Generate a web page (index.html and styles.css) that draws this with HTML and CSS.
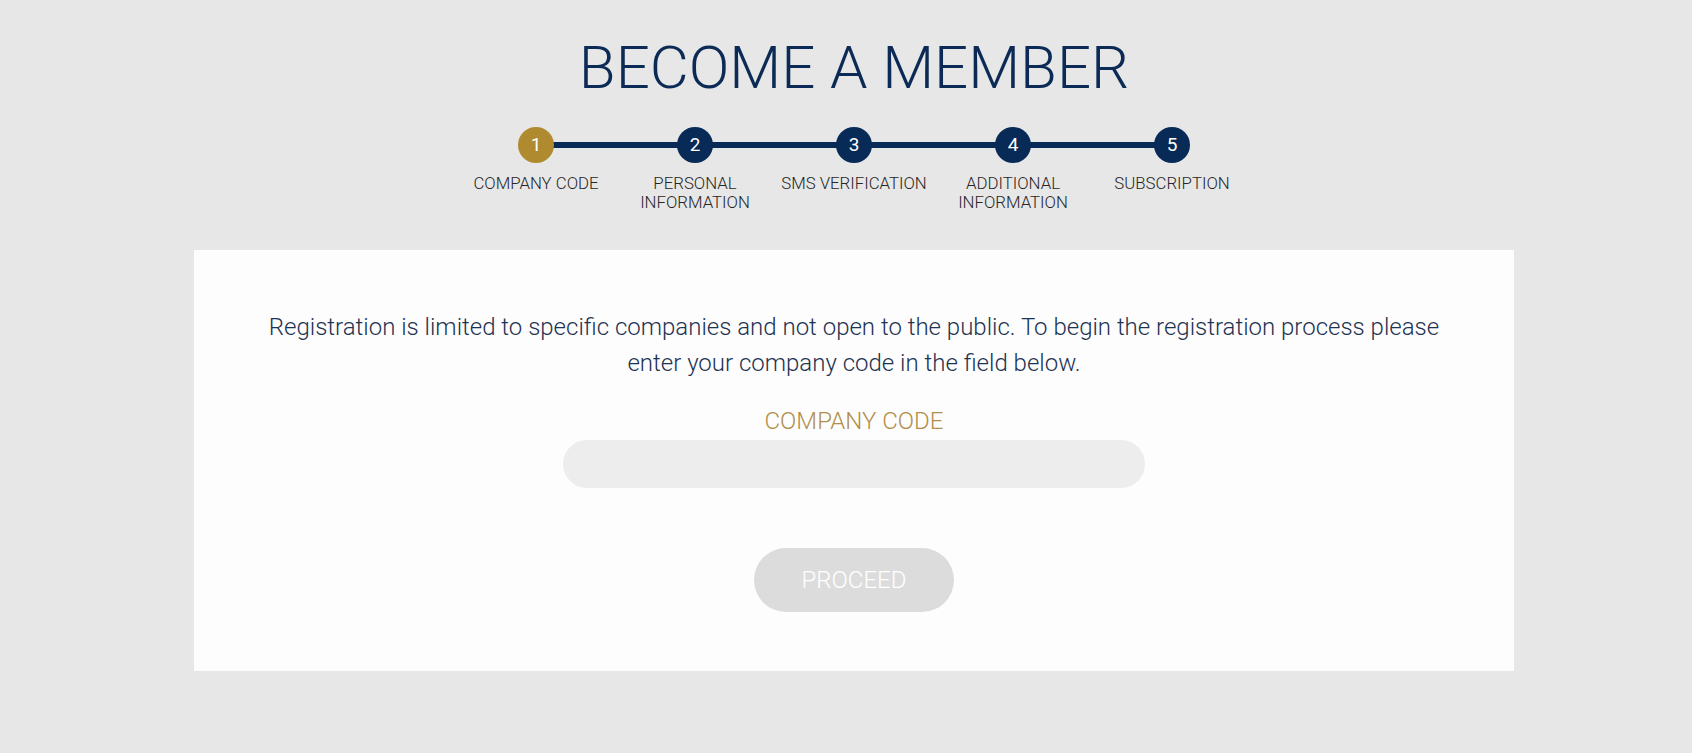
FILE: index.html
```html
<!DOCTYPE html>
<html lang="en">
<head>
<meta charset="utf-8">
<title>Become a member</title>
<link rel="stylesheet" href="styles.css">
</head>
<body>
<main class="page">
  <h1 class="title">BECOME A MEMBER</h1>
  <ol class="stepper">
    <li class="step step-active"><span class="dot">1</span><span class="step-label">COMPANY CODE</span></li>
    <li class="step"><span class="dot">2</span><span class="step-label">PERSONAL<br>INFORMATION</span></li>
    <li class="step"><span class="dot">3</span><span class="step-label">SMS VERIFICATION</span></li>
    <li class="step"><span class="dot">4</span><span class="step-label">ADDITIONAL<br>INFORMATION</span></li>
    <li class="step"><span class="dot">5</span><span class="step-label">SUBSCRIPTION</span></li>
  </ol>
  <section class="card">
    <p class="intro">Registration is limited to specific companies and not open to the public. To begin the registration process please enter your company code in the field below.</p>
    <label class="field-label" for="code">COMPANY CODE</label>
    <input class="field" id="code" type="text">
    <button class="proceed" type="button">PROCEED</button>
  </section>
</main>
</body>
</html>
```
FILE: styles.css
```css
html, body {
  margin: 0;
  padding: 0;
  background: #e7e7e7;
}
body {
  font-family: Roboto, "Liberation Sans", sans-serif;
  padding-left: 16px;
}
.page {
  width: 1320px;
  margin: 0 auto;
  display: flex;
  flex-direction: column;
  align-items: center;
  padding-top: 32px;
  padding-bottom: 81px;
}
.title {
  margin: 0;
  font-size: 60px;
  line-height: 72px;
  font-weight: 300;
  color: #0b2a55;
  letter-spacing: 0;
}
.stepper {
  list-style: none;
  margin: 23px 0 0;
  padding: 0;
  display: flex;
  position: relative;
}
.stepper::before {
  content: "";
  position: absolute;
  left: 79px;
  right: 79px;
  top: 15px;
  height: 6px;
  background: #072a57;
}
.step {
  width: 159px;
  display: flex;
  flex-direction: column;
  align-items: center;
  position: relative;
}
.dot {
  width: 36px;
  height: 36px;
  border-radius: 50%;
  background: #072a57;
  color: #fff;
  font-size: 19px;
  line-height: 36px;
  text-align: center;
  font-weight: 400;
  position: relative;
}
.step-active .dot {
  background: #b08a2e;
}
.step-label {
  margin-top: 11px;
  font-size: 16.8px;
  line-height: 19.2px;
  font-weight: 300;
  color: #262626;
  text-align: center;
  white-space: nowrap;
}
.card {
  margin-top: 38px;
  width: 100%;
  box-sizing: border-box;
  background: #fdfdfd;
  padding: 59px 60px 59px;
  display: flex;
  flex-direction: column;
  align-items: center;
}
.intro {
  margin: 0;
  max-width: 1190px;
  font-size: 24px;
  line-height: 36px;
  font-weight: 300;
  color: #1d3352;
  text-align: center;
}
.field-label {
  margin-top: 26px;
  font-size: 24px;
  line-height: 28px;
  font-weight: 300;
  color: #b08f4c;
}
.field {
  margin-top: 5px;
  width: 582px;
  height: 48px;
  box-sizing: border-box;
  border: none;
  border-radius: 24px;
  background: #ededed;
  padding: 0 24px;
  font-family: inherit;
  font-size: 18px;
  outline: none;
}
.proceed {
  margin-top: 60px;
  width: 200px;
  height: 64px;
  border: none;
  border-radius: 32px;
  background: #dcdcdc;
  color: #fff;
  font-family: inherit;
  font-size: 24px;
  font-weight: 300;
  cursor: default;
}
```
